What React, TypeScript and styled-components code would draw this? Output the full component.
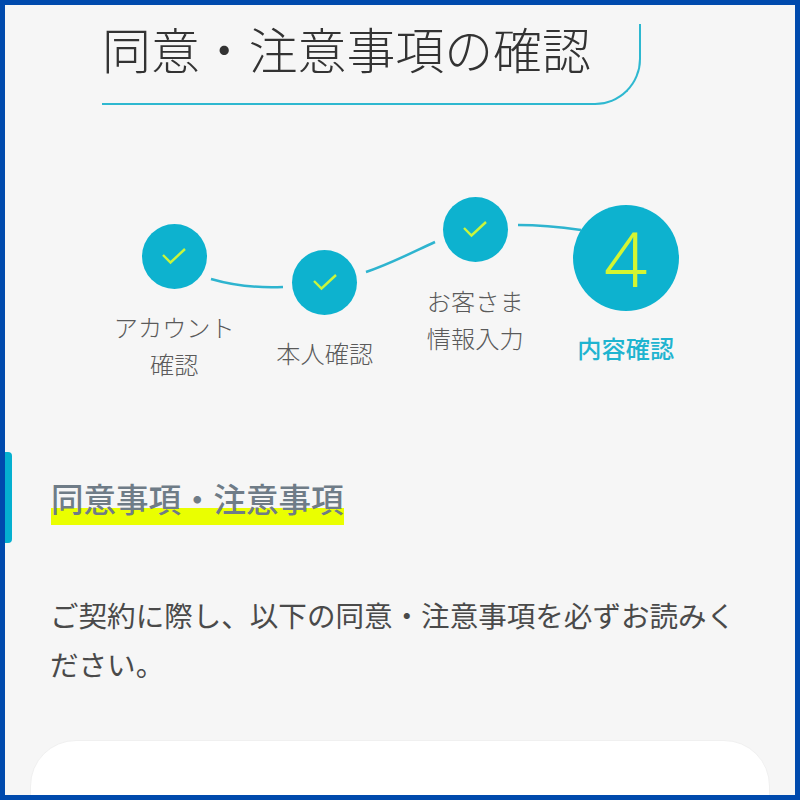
import { createGlobalStyle, styled } from 'styled-components'

const GlobalStyle = createGlobalStyle`
  html, body {
    margin: 0;
    padding: 0;
  }
  body {
    font-family: "Noto Sans CJK JP", "Noto Sans", sans-serif;
  }
`

const steps = [
  { lines: ['アカウント', '確認'], top: 46, gap: 19 },
  { lines: ['本人確認'], top: 72, gap: 19 },
  { lines: ['お客さま', '情報入力'], top: 19, gap: 20 }
]

function Check() {
  return (
    <svg width="26" height="20" viewBox="0 0 26 20">
      <path d="M2 8 L9.5 15.5 L24 2" fill="none" stroke="#c9f53c" strokeWidth="2.4" />
    </svg>
  )
}

function App() {
  return (
    <Frame>
      <GlobalStyle />
      <SideTab />
      <TitleBox>
        <Title>同意・注意事項の確認</Title>
      </TitleBox>

      <Stepper>
        <Connectors width="790" height="160" viewBox="0 0 790 160">
          <path d="M206 87 C 230 94, 255 96, 278 95" />
          <path d="M361 80 C 385 72, 408 60, 430 50" />
          <path d="M513 33 C 535 33, 555 35, 576 38" />
        </Connectors>
        {steps.map(({ lines, top, gap }) => {
          return (
            <Step key={lines[0]} $top={top}>
              <Circle>
                <Check />
              </Circle>
              <StepLabel $gap={gap}>
                {lines.map((line) => {
                  return <div key={line}>{line}</div>
                })}
              </StepLabel>
            </Step>
          )
        })}
        <Step $top={27}>
          <BigCircle>4</BigCircle>
          <StepLabel $gap={18} $active>
            <div>内容確認</div>
          </StepLabel>
        </Step>
      </Stepper>

      <Section>
        <Heading>
          <Marked>同意事項・注意事項</Marked>
        </Heading>
        <Body>ご契約に際し、以下の同意・注意事項を必ずお読みください。</Body>
      </Section>

      <Card />
    </Frame>
  )
}

const Frame = styled.div`
  position: relative;
  box-sizing: border-box;
  width: 800px;
  height: 800px;
  border: 5px solid #004aad;
  background-color: #f6f6f6;
  overflow: hidden;
`

const SideTab = styled.div`
  position: absolute;
  left: 0;
  top: 447px;
  width: 7px;
  height: 91px;
  background-color: #05b0d0;
  border-radius: 0 4px 4px 0;
`

const TitleBox = styled.div`
  box-sizing: border-box;
  width: 539px;
  height: 81px;
  margin: 19px 0 0 97px;
  border-right: 2px solid #2eb8d0;
  border-bottom: 2px solid #2eb8d0;
  border-bottom-right-radius: 46px;
`

const Title = styled.h1`
  margin: 0;
  font-size: 48.9px;
  font-weight: 300;
  line-height: 50px;
  color: #333;
  white-space: nowrap;
  transform: translateY(-1px);
`

const Stepper = styled.div`
  position: relative;
  display: flex;
  height: 368px;
  padding-left: 94px;
`

const Connectors = styled.svg`
  position: absolute;
  left: 0;
  top: 87px;
  fill: none;
  stroke: #2eb4cf;
  stroke-width: 2.5;
  path {
    fill: none;
  }
`

const Step = styled.div<{ $top: number }>`
  position: relative;
  display: flex;
  flex-direction: column;
  align-items: center;
  width: 150.5px;
  padding-top: ${(p) => p.$top + 73}px;
  box-sizing: border-box;
`

const Circle = styled.div`
  display: flex;
  align-items: center;
  justify-content: center;
  width: 65px;
  height: 65px;
  border-radius: 50%;
  background-color: #0db2cf;
`

const BigCircle = styled.div`
  display: flex;
  align-items: center;
  justify-content: center;
  width: 106px;
  height: 106px;
  border-radius: 50%;
  background-color: #0db2cf;
  font-family: "Noto Sans", sans-serif;
  font-size: 76px;
  font-weight: 350;
  color: #d4f532;
  line-height: 1;
`

const StepLabel = styled.div<{ $gap: number; $active?: boolean }>`
  margin-top: ${(p) => p.$gap}px;
  font-size: 24.2px;
  line-height: 37px;
  font-weight: ${(p) => (p.$active ? 500 : 300)};
  color: ${(p) => (p.$active ? '#1fb4d0' : '#5a5a5a')};
  text-align: center;
  white-space: nowrap;
`

const Section = styled.section`
  padding: 0 40px 0 46px;
`

const Heading = styled.h2`
  margin: 0;
  font-size: 32.5px;
  font-weight: 500;
  line-height: 50px;
  color: #6f7c87;
`

const Marked = styled.span`
  padding-bottom: 4px;
  background: linear-gradient(transparent 67.5%, #eaff00 67.5%);
`

const Body = styled.p`
  margin: 67px 0 0 -1px;
  font-size: 28.55px;
  line-height: 49px;
  color: #4a4a4a;
`

const Card = styled.div`
  box-sizing: border-box;
  width: 740px;
  height: 120px;
  margin: 52px 0 0 25px;
  background-color: #fff;
  border: 1px solid #f0f0f0;
  border-radius: 46px;
`

export default App
